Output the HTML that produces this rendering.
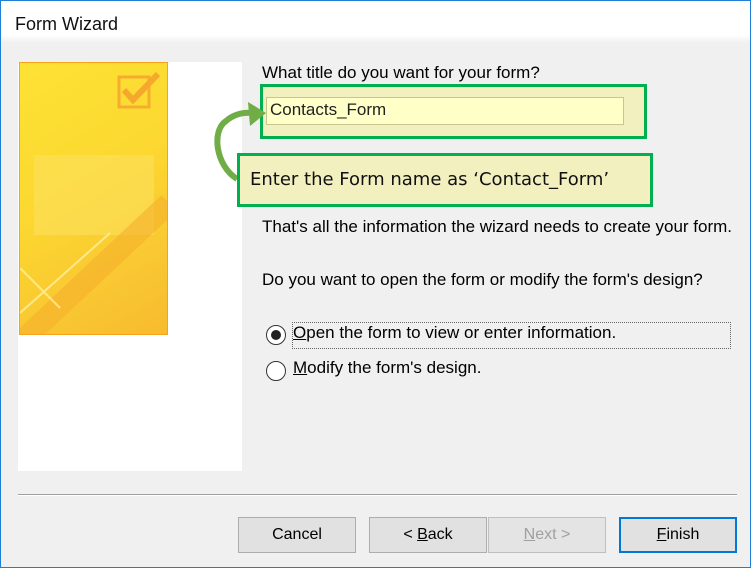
<!DOCTYPE html>
<html><head><style>
*{margin:0;padding:0;box-sizing:border-box}
body{width:754px;height:569px;background:#fff;font-family:"Liberation Sans",sans-serif;position:relative;overflow:hidden}
.win{position:absolute;left:0;top:0;width:751px;height:568px;border:1px solid #1e7fd6;background:#f0f0f0}
.tb{position:absolute;left:0;top:0;width:749px;height:42px;background:linear-gradient(#fff 0,#fff 34px,#f0f0f0 42px)}
.a{position:absolute;white-space:nowrap;font-size:17px;color:#000}
.btn{position:absolute;top:516px;height:36px;width:118px;border:1px solid #adadad;background:#e1e1e1;font-size:16px;text-align:center;line-height:34px}
u{text-decoration:underline}
</style></head><body>
<div class="win">
<div class="tb"></div>
<div class="a" style="left:14px;top:13px;font-size:18px;color:#111">Form Wizard</div>
<div style="position:absolute;left:17px;top:61px;width:224px;height:409px;background:#fff"></div>
<div style="position:absolute;left:18px;top:61px;width:149px;height:273px;border:1px solid #f7a21a;background:linear-gradient(150deg,#fde234 0%,#fcd830 45%,#f9c832 75%,#f7bb30 100%);overflow:hidden">
<svg width="149" height="273" style="position:absolute;left:0;top:0">
<rect x="99" y="14" width="30" height="30" fill="none" stroke="#f6ac2e" stroke-width="3"/>
<path d="M104 27 L113 37 L138 11" stroke="#f6a82e" stroke-width="6" fill="none"/>
<g fill="#fcdf5e" opacity=".6"><rect x="14" y="92" width="120" height="80"/></g>
<path d="M0 280 L149 140" stroke="#f6b12c" stroke-width="22" opacity=".6"/>
<path d="M0 205 L40 245 M0 250 L90 170" stroke="#fff6b0" stroke-width="2" opacity=".7"/>
</svg></div>
<div class="a" style="left:261px;top:62px">What title do you want for your form?</div>
<div style="position:absolute;left:259px;top:83px;width:387px;height:55px;border:3px solid #00b050;background:#f2f0be"></div>
<div style="position:absolute;left:265px;top:96px;width:358px;height:28px;border:1px solid #c9c590;background:#ffffc8"></div>
<div class="a" style="left:269px;top:99px;font-size:17px;color:#222">Contacts_Form</div>
<svg style="position:absolute;left:205px;top:95px" width="60" height="90"><path d="M31 83 C10 70 5 35 20 25 C28 18 38 16 48 17" stroke="#70ad47" stroke-width="6" fill="none"/><path d="M42 6 L60 17 L44 30 Z" fill="#70ad47"/></svg>
<div style="position:absolute;left:236px;top:152px;width:416px;height:54px;border:3px solid #00b050;background:#f2f0be"></div>
<div class="a" style="left:249px;top:168px;color:#111;font-family:'DejaVu Sans',sans-serif;font-size:18px">Enter the Form name as ‘Contact_Form’</div>
<div class="a" style="left:261px;top:216px">That's all the information the wizard needs to create your form.</div>
<div class="a" style="left:261px;top:269px">Do you want to open the form or modify the form's design?</div>
<div style="position:absolute;left:265px;top:324px;width:20px;height:20px;border:1px solid #333;border-radius:50%;background:#fff"><div style="position:absolute;left:4px;top:4px;width:10px;height:10px;border-radius:50%;background:#222"></div></div>
<div style="position:absolute;left:291px;top:321px;width:439px;height:27px;border:1px dotted #666"></div>
<div class="a" style="left:292px;top:322px"><u>O</u>pen the form to view or enter information.</div>
<div style="position:absolute;left:265px;top:360px;width:20px;height:20px;border:1px solid #333;border-radius:50%;background:#fff"></div>
<div class="a" style="left:292px;top:357px"><u>M</u>odify the form's design.</div>
<div style="position:absolute;left:17px;top:493px;width:719px;height:2px;border-top:1px solid #a0a0a0;border-bottom:1px solid #fff"></div>
<div class="btn" style="left:237px">Cancel</div>
<div class="btn" style="left:368px">&lt; <u>B</u>ack</div>
<div class="btn" style="left:487px;color:#a0a0a0;border-color:#bfbfbf;background:#e4e4e4"><u>N</u>ext &gt;</div>
<div class="btn" style="left:618px;border:2px solid #0078d7;line-height:32px"><u>F</u>inish</div>
</div>
</body></html>
